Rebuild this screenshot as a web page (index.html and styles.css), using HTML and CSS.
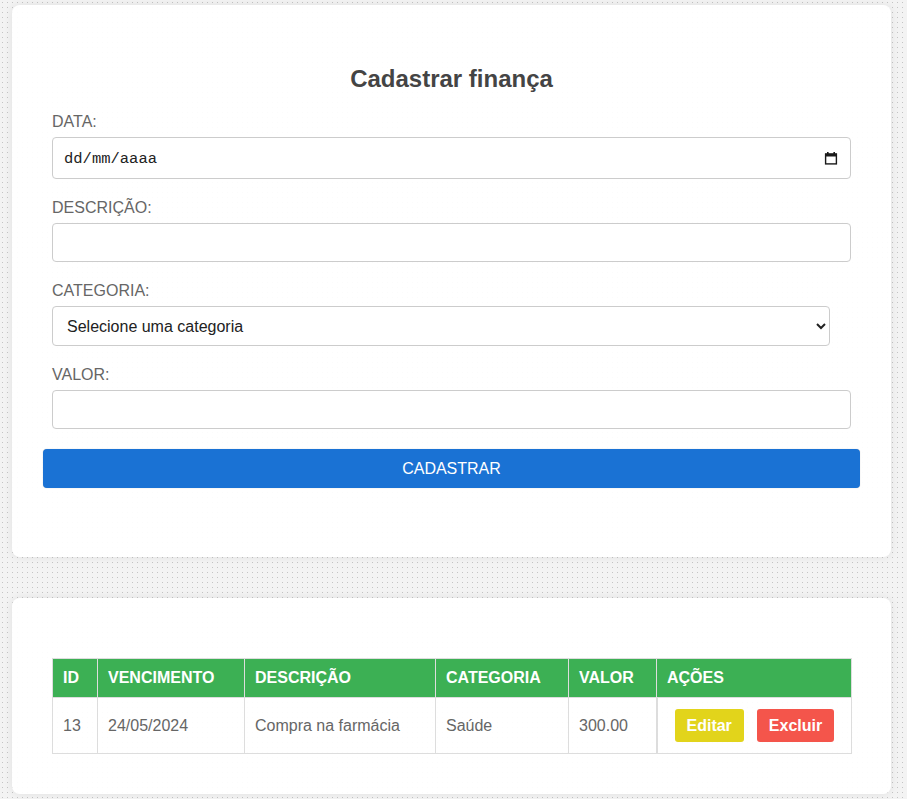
FILE: index.html
```html
<!DOCTYPE html>
<html lang="pt-BR">
<head>
<meta charset="utf-8">
<title>Cadastrar finança</title>
<link rel="stylesheet" href="styles.css">
</head>
<body>
<main class="page">
  <section class="card card-form">
    <h2 class="title">Cadastrar finança</h2>
    <form class="form">
      <label class="label">DATA:</label>
      <div class="date-field">
        <span class="date-text">dd/mm/aaaa</span>
        <svg class="cal-icon" width="14" height="14" viewBox="0 0 14 14" aria-hidden="true">
          <rect x="1.6" y="3.1" width="10.8" height="9.8" fill="none" stroke="#1a1a1a" stroke-width="1.4"/>
          <rect x="1" y="2.5" width="12" height="3" fill="#1a1a1a"/>
          <rect x="3" y="1" width="1.6" height="2" fill="#1a1a1a"/>
          <rect x="9.4" y="1" width="1.6" height="2" fill="#1a1a1a"/>
        </svg>
      </div>
      <label class="label">DESCRIÇÃO:</label>
      <input class="input" type="text">
      <label class="label">CATEGORIA:</label>
      <select class="select">
        <option>Selecione uma categoria</option>
      </select>
      <label class="label">VALOR:</label>
      <input class="input" type="text">
      <button type="button" class="btn-submit">CADASTRAR</button>
    </form>
  </section>

  <section class="card card-table">
    <table class="table">
      <colgroup>
        <col class="c-id"><col class="c-venc"><col class="c-desc"><col class="c-cat"><col class="c-val"><col class="c-act">
      </colgroup>
      <thead>
        <tr>
          <th>ID</th><th>VENCIMENTO</th><th>DESCRIÇÃO</th><th>CATEGORIA</th><th>VALOR</th><th>AÇÕES</th>
        </tr>
      </thead>
      <tbody>
        <tr>
          <td>13</td><td>24/05/2024</td><td>Compra na farmácia</td><td>Saúde</td><td>300.00</td>
          <td class="actions">
            <div class="actions-wrap">
              <button type="button" class="btn btn-edit">Editar</button>
              <button type="button" class="btn btn-del">Excluir</button>
            </div>
          </td>
        </tr>
      </tbody>
    </table>
  </section>
</main>
</body>
</html>
```

FILE: styles.css
```css
html, body {
  margin: 0;
  padding: 0;
}
body {
  font-family: "Liberation Sans", Arial, sans-serif;
  font-size: 16px;
  color: #666;
  background-color: #f3f3f3;
  background-image: radial-gradient(circle, #c4c4c4 0.7px, transparent 0.8px);
  background-size: 5px 5px;
  background-position: 0 0;
  min-height: 799px;
}
.page {
  padding: 5px 16px 0 12px;
  display: flex;
  flex-direction: column;
  gap: 41px;
}
.card {
  background: rgba(255, 255, 255, 0.93);
  border-radius: 8px;
  box-shadow: 0 0 8px rgba(0, 0, 0, 0.08);
  padding: 40px;
}
.card-form {
  padding-bottom: 69px;
}
.title {
  margin: 20px 0;
  text-align: center;
  font-size: 24px;
  font-weight: bold;
  color: #444;
  line-height: 28px;
}
.form {
  display: flex;
  flex-direction: column;
}
.label {
  display: block;
  line-height: 18px;
  margin-bottom: 6px;
  color: #666;
}
.date-field {
  height: 42px;
  box-sizing: border-box;
  border: 1px solid #ccc;
  border-radius: 4px;
  background: #fff;
  display: flex;
  align-items: center;
  justify-content: space-between;
  padding: 0 12px 0 11px;
  margin-bottom: 20px;
}
.date-text {
  font-family: "Liberation Mono", "DejaVu Sans Mono", monospace;
  font-size: 15.5px;
  color: #222;
  padding-top: 1px;
}
.cal-icon {
  display: block;
  margin-top: -1px;
}
.input {
  height: 39px;
  box-sizing: border-box;
  border: 1px solid #ccc;
  border-radius: 4px;
  background: #fff;
  font-family: inherit;
  font-size: 16px;
  padding: 0 10px;
  margin: 0 0 20px 0;
}
.select {
  height: 40px;
  width: 778px;
  box-sizing: border-box;
  border: 1px solid #ccc;
  border-radius: 4px;
  background: #fff;
  font-family: "Liberation Sans", Arial, sans-serif;
  font-size: 16px;
  color: #222;
  padding: 0 10px;
  margin: 0 0 20px 0;
}
.btn-submit {
  margin: 0 -9px;
  height: 39px;
  border: none;
  border-radius: 4px;
  background: #1a72d4;
  color: #fff;
  font-family: inherit;
  font-size: 16px;
  box-shadow: 0 0 1px rgba(0,0,0,0.3);
}
.card-table {
  padding-top: 60px;
}
.table {
  width: 100%;
  border-collapse: collapse;
  table-layout: fixed;
  border: 1px solid #ddd;
}
.c-id { width: 45px; }
.c-venc { width: 147px; }
.c-desc { width: 191px; }
.c-cat { width: 133px; }
.c-val { width: 88px; }
.c-act { width: 195px; }
.table th {
  background: #3cb054;
  color: #fff;
  font-weight: bold;
  text-align: left;
  padding: 10px 10px;
  line-height: 18px;
  border: 1px solid #ddd;
  border-top: none;
}
.table td {
  padding: 11px 10px;
  line-height: 18px;
  border: 1px solid #ddd;
  color: #666;
  white-space: nowrap;
}
.table td.actions {
  padding: 11px 10px 11px 17px;
  border-left: 2px solid #ddd;
}
.actions-wrap {
  display: flex;
  gap: 13px;
}
.btn {
  height: 33px;
  border: none;
  border-radius: 3px;
  padding: 0 12px;
  font-family: inherit;
  font-size: 16px;
  font-weight: bold;
  color: #fff;
}
.btn-edit { background: #e2d41b; }
.btn-del { background: #f4554b; }
```
